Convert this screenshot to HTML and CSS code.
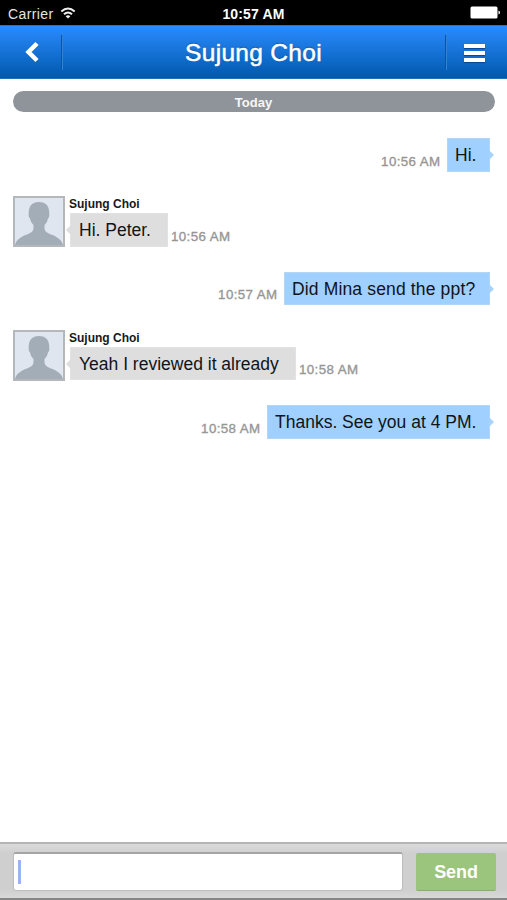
FILE: index.html
```html
<!DOCTYPE html>
<html lang="en">
<head>
<meta charset="utf-8">
<title>Sujung Choi</title>
<link rel="stylesheet" href="styles.css">
</head>
<body>
<svg class="defs" aria-hidden="true">
  <symbol id="person" viewBox="0 0 48 47">
    <path d="M0 47C1 42 6 38.500 12 36.500C17 34.500 18.500 33 18.500 29.500V27C16.500 25 15.500 23 15 20.500C14 19.500 13.500 18 13.700 16C13.500 8 17 4 24 4C31 4 34.500 8 34.300 16C34.500 18 34 19.500 33 20.500C32.500 23 31.500 25 29.500 27V29.500C29.500 33 31 34.500 36 36.500C42 38.500 47 42 48 47Z" fill="#a3adb8"/>
  </symbol>
</svg>
<div class="screen">
  <div class="status">
    <div class="carrier"><span>Carrier</span>
      <svg width="16" height="12" viewBox="0 0 16 12" fill="none" stroke="#eee" stroke-width="2"><path d="M1.300 4.500Q8 -1.500 14.700 4.500M4 7.300Q8 3.700 12 7.300"/><path d="M8 11.500L5.600 9.300Q8 7.400 10.400 9.300Z" fill="#eee" stroke="none"/></svg>
    </div>
    <div class="clock">10:57 AM</div>
    <svg class="battery" width="31" height="13" viewBox="0 0 31 13" fill="#fff"><rect x=".5" y=".5" width="27" height="12" rx="1.500"/><path d="M28.500 4.500Q30 5 30 6.500T28.500 8.500Z"/></svg>
  </div>
  <header class="nav">
    <div class="side left"><svg width="16" height="22" viewBox="0 0 16 22" fill="none" stroke="#fff" stroke-width="4.500"><path d="M13 2.500L4.500 11L13 19.500"/></svg></div>
    <h1>Sujung Choi</h1>
    <div class="side right"><i></i><i></i><i></i></div>
  </header>
  <main class="chat">
    <div class="day">Today</div>
    <div class="msg mine"><time>10:56 AM</time><div class="bubble"><span>Hi.</span></div></div>
    <div class="msg theirs"><svg class="avatar"><use href="#person"/></svg><div class="body"><div class="name">Sujung Choi</div><div class="line"><div class="bubble b2"><span>Hi. Peter.</span></div><time>10:56 AM</time></div></div></div>
    <div class="msg mine"><time>10:57 AM</time><div class="bubble b3"><span>Did Mina send the ppt?</span></div></div>
    <div class="msg theirs"><svg class="avatar"><use href="#person"/></svg><div class="body"><div class="name">Sujung Choi</div><div class="line"><div class="bubble b4"><span>Yeah I reviewed it already</span></div><time>10:58 AM</time></div></div></div>
    <div class="msg mine"><time>10:58 AM</time><div class="bubble b5"><span>Thanks. See you at 4 PM.</span></div></div>
  </main>
  <footer class="composer">
    <div class="field"><span class="caret"></span></div>
    <div class="send">Send</div>
  </footer>
</div>
</body>
</html>
```

FILE: styles.css
```css
* { box-sizing: border-box; }
body { margin: 0; background: #fff; font-family: "Liberation Sans", Arial, sans-serif; }
.defs { display: none; }
.screen { width: 507px; height: 900px; display: flex; flex-direction: column; overflow: hidden; }

.status { height: 25px; flex: none; background: #000; color: #fff; display: grid; grid-template-columns: 1fr auto 1fr; align-items: center; padding: 3px 6px 0 8px; font-size: 13px; }
.carrier { display: flex; align-items: center; gap: 6px; color: #e4e4e4; font-size: 14px; letter-spacing: .4px; line-height: 16px; }
.carrier svg { margin-top: -3px; }
.clock { font-weight: bold; font-size: 14px; letter-spacing: .15px; line-height: 16px; padding-right: 2px; }
.battery { justify-self: end; margin-top: -3px; }

.nav { height: 54px; flex: none; display: flex; align-items: center; background: linear-gradient(#2b8bff, #0059ad); border-top: 1px solid #2273cf; border-bottom: 1px solid #2370b5; }
.nav h1 { flex: 1; margin: 0; text-align: center; color: #fff; font-size: 24.5px; font-weight: normal; letter-spacing: .3px; line-height: 30px; padding-top: 2px; -webkit-text-stroke: .5px #fff; text-shadow: 0 -1px 1px #124e91; }
.side { width: 62px; height: 35px; display: flex; align-items: center; justify-content: center; }
.left { border-right: 1px solid #0c55a5; box-shadow: 1px 0 #2e83d8; padding-left: 3px; }
.right { border-left: 1px solid #0c55a5; box-shadow: inset 1px 0 #2e83d8; flex-direction: column; gap: 3px; padding-right: 4px; padding-top: 1px; }
.side i { width: 21px; height: 4px; background: #fff; box-shadow: 0 1px 1px #08468c; }

.chat { flex: 1; padding: 12px 17px 0 13px; display: flex; flex-direction: column; gap: 24.5px; }
.day { height: 21px; margin: 0 -5px 1.5px 0; border-radius: 11px; background: #8f949a; color: #f6f6f6; font-size: 13px; font-weight: bold; text-align: center; line-height: 23px; padding-right: 1px; flex: none; width: 482px; }
.msg { display: flex; flex: none; }
.mine { height: 33.5px; justify-content: flex-end; align-items: flex-end; gap: 6.5px; }
.theirs { height: 51px; }
time { font-size: 13.3px; line-height: 15px; color: #969696; letter-spacing: .4px; -webkit-text-stroke: .35px #969696; white-space: nowrap; padding-bottom: 3px; }
.bubble { height: 33.5px; position: relative; font-size: 17.5px; line-height: 32px; white-space: nowrap; color: #101418; border: 1px solid #b3d6f5; background: #9fd0ff; width: 43px; flex: none; padding-left: 7px; }
.bubble::after { content: ""; position: absolute; left: 100%; top: 11px; border: 5px solid transparent; border-left-color: #a9d3f8; border-right: 0; }
.theirs .bubble { background: #dedede; border-color: #e2e2e2; padding-left: 8px; }
.theirs .bubble::after { left: auto; right: 100%; border: 5px solid transparent; border-right-color: #dedede; border-left: 0; }
.b2 { width: 98px; }
.b3 { width: 206px; letter-spacing: .15px; }
.b4 { width: 226px; }
.b5 { width: 223px; }
.avatar { width: 52px; height: 51px; border: 2px solid #b5b8ba; background: #dfe6ef; }
.body { padding-left: 5px; }
.name { height: 17px; margin-left: -1px; font-size: 12px; font-weight: bold; line-height: 16px; color: #181818; }
.line { display: flex; align-items: flex-end; gap: 3px; }

.composer { height: 58px; flex: none; display: flex; align-items: flex-start; gap: 13px; padding: 8px 11px 0 13px; background: linear-gradient(#dadada, #cfcfcf 10px, #cfcfcf 45px, #d8d8d8); border-top: 2px solid #b5b5b5; border-bottom: 2px solid #858585; }
.field { width: 390px; height: 39px; background: #fff; border: 1px solid #bdbdbd; border-top: 2px solid #a5a5a5; border-radius: 3px; padding: 6px 4px; }
.caret { display: block; width: 3px; height: 24px; background: #9db2f5; }
.send { width: 80px; height: 38px; margin-top: 1px; background: #9bc47d; border-bottom: 1px solid #88ab70; border-radius: 2px; color: #fff; text-align: center; font-size: 18px; font-weight: bold; line-height: 38px; letter-spacing: -.1px; }
```
